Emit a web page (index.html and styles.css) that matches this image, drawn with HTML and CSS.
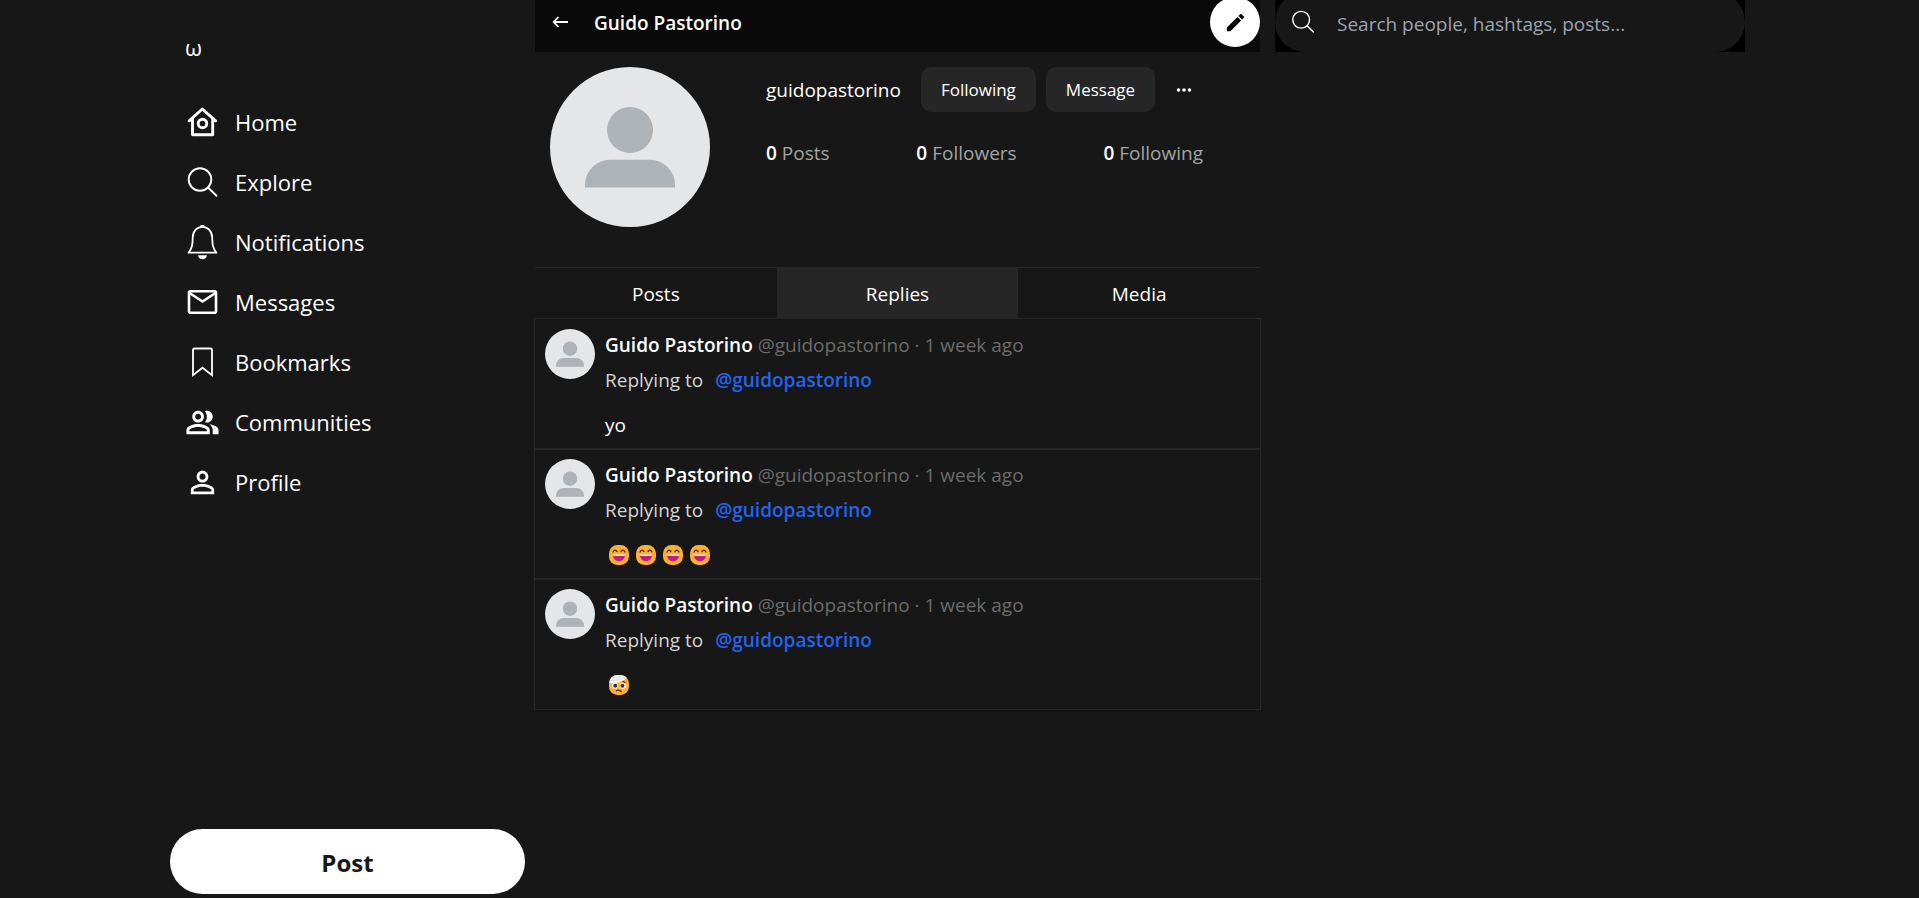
FILE: index.html
```html
<!DOCTYPE html>
<html lang="en">
<head>
<meta charset="utf-8">
<meta name="viewport" content="width=device-width, initial-scale=1">
<title>Guido Pastorino</title>
<link rel="stylesheet" href="styles.css">
</head>
<body>
<svg class="defs" aria-hidden="true">
  <symbol id="avatar" viewBox="0 0 160 160">
    <circle cx="80" cy="80" r="80" fill="#e4e6e7"/>
    <circle cx="80" cy="63" r="23" fill="#adb3b7"/>
    <path d="M35 120.500V118a25 25 0 0 1 25-25.300h40a25 25 0 0 1 25 25.300v2.500z" fill="#adb3b7"/>
  </symbol>
  <symbol id="search" viewBox="0 0 35 35">
    <g fill="none" stroke="currentColor" stroke-width="1.900" stroke-linecap="round"><circle cx="15" cy="14.500" r="11.300"/><path d="M23 22.500l8.500 8.300"/></g>
  </symbol>
  <symbol id="laugh" viewBox="0 0 20 20">
    <rect width="20" height="20" rx="8.500" fill="#ffb02e"/>
    <path d="M4 7q1.800-3.400 4-.500M12 6.500q2.200-2.900 4 .5" fill="none" stroke="#402a32" stroke-width="1.300" stroke-linecap="round"/>
    <path d="M4 9.700h12c0 4-2.700 6.500-6 6.500s-6-2.500-6-6.500z" fill="#bb1d80"/>
    <path d="M4 9.600h12l-.4 1.400H4.400z" fill="#fff"/>
  </symbol>
  <symbol id="bandage" viewBox="0 0 20 20">
    <rect width="20" height="20" rx="8.500" fill="#ffb02e"/>
    <path d="M.3 8C.5 3 4 0 9 0c4 0 7.500 1 8.700 3.200C13 7 6 9 .3 8z" fill="#f4f4f4"/>
    <path d="M1 5.500C6 6 12 4.200 16 1.800M3 3c4 .5 7-.5 10-2.500" fill="none" stroke="#d3d3d8" stroke-width=".7"/>
    <circle cx="6" cy="10.700" r="3" fill="#fff"/><circle cx="14" cy="10.700" r="3" fill="#fff"/>
    <circle cx="6.300" cy="10.700" r="2" fill="#402a32"/><circle cx="13.500" cy="10.700" r="2" fill="#402a32"/>
    <path d="M7.300 15.700q2.500-1.600 5 .8M14 6.500l2 1" fill="none" stroke="#402a32" stroke-width="1.200" stroke-linecap="round"/>
  </symbol>
</svg>
<div class="layout">
  <aside class="sidebar">
    <a class="logo" href="#">ω</a>
    <nav class="nav">
      <a href="#"><svg viewBox="1 .5 35 35"><g fill="none" stroke="currentColor" stroke-width="2.900" stroke-linejoin="round" stroke-linecap="round"><path d="M5.200 16.300L18.300 4.500l13.300 11.800"/><path d="M8.500 14v16.300h20.200V14"/><circle cx="18.500" cy="19" r="4.300"/></g></svg><span>Home</span></a>
      <a href="#"><svg><use href="#search"/></svg><span>Explore</span></a>
      <a href="#"><svg viewBox="1 .5 35 35"><path d="M4.500 28.200C8.300 23.500 8.500 20.500 8.700 13c.2-6.500 4.500-10.700 9.700-10.700S27.900 6.500 28.200 13c.2 7.500.500 10.500 4.300 15.200z" fill="none" stroke="currentColor" stroke-width="1.800" stroke-linejoin="round"/><path d="M16.200 2a2.200 1.800 0 0 1 4.400 0zM14 30.700h9q-.8 4-4.500 4t-4.500-4z" fill="currentColor"/></svg><span>Notifications</span></a>
      <a href="#"><svg viewBox="1 .5 35 35"><g fill="none" stroke="currentColor" stroke-width="2.600" stroke-linejoin="round"><rect x="5" y="6.700" width="27" height="21.500" rx="1.500"/><path d="M5.500 8.500L18.500 17l13-8.500"/></g></svg><span>Messages</span></a>
      <a href="#"><svg viewBox="1 .5 35 35"><path d="M9 30.700V5.500Q9 4 10.500 4H26.500Q28 4 28 5.500V30.700l-9.500-7.500z" fill="none" stroke="currentColor" stroke-width="1.800"/></svg><span>Bookmarks</span></a>
      <a href="#"><svg viewBox="0 0 24 24"><path fill="currentColor" fill-rule="evenodd" d="M16.670 13.130C18.040 14.060 19 15.320 19 17v3h4v-3c0-2.180-3.570-3.470-6.330-3.870zM15 12c2.210 0 4-1.790 4-4s-1.790-4-4-4c-.47 0-.91.1-1.330.24C14.500 5.270 15 6.580 15 8s-.5 2.730-1.330 3.760c.42.14.86.24 1.330.24zM9 12c2.210 0 4-1.790 4-4s-1.790-4-4-4-4 1.790-4 4 1.790 4 4 4zm0-6c1.100 0 2 .9 2 2s-.9 2-2 2-2-.9-2-2 .9-2 2-2zM9 13c-2.670 0-8 1.340-8 4v3h16v-3c0-2.660-5.330-4-8-4zm6 5H3v-.99C3.200 16.290 6.300 15 9 15s5.800 1.290 6 2v1z"/></svg><span>Communities</span></a>
      <a href="#"><svg viewBox="0 0 24 24"><path fill="currentColor" fill-rule="evenodd" d="M12 5.900c1.160 0 2.100.94 2.100 2.100s-.94 2.100-2.100 2.100S9.900 9.160 9.900 8s.94-2.100 2.100-2.100m0 9c2.970 0 6.100 1.460 6.100 2.100v1.100H5.900V17c0-.64 3.130-2.100 6.100-2.100M12 4C9.790 4 8 5.790 8 8s1.790 4 4 4 4-1.790 4-4-1.790-4-4-4zm0 9c-2.670 0-8 1.340-8 4v3h16v-3c0-2.660-5.330-4-8-4z"/></svg><span>Profile</span></a>
    </nav>
    <button class="post-button" type="button">Post</button>
  </aside>

  <main class="main">
    <header class="topbar">
      <button class="back" type="button" aria-label="Back"><svg viewBox="0 0 16 16"><path d="M15.500 8H1.500M6 3L1.200 8 6 13" fill="none" stroke="currentColor" stroke-width="1.800"/></svg></button>
      <h1>Guido Pastorino</h1>
      <button class="edit" type="button" aria-label="Edit profile"><svg viewBox="0 0 24 24"><path d="M3 17.250V21h3.750L17.810 9.940l-3.750-3.750L3 17.250zM20.710 7.040c.39-.39.39-1.020 0-1.410l-2.340-2.340a1 1 0 0 0-1.410 0l-1.830 1.830 3.750 3.750 1.830-1.830z" fill="currentColor"/></svg></button>
    </header>

    <section class="profile">
      <svg class="avatar-large" role="img" aria-label="Guido Pastorino"><use href="#avatar"/></svg>
      <div class="info">
        <div class="actions">
          <span class="username">guidopastorino</span>
          <button class="pill" type="button">Following</button>
          <button class="pill" type="button">Message</button>
          <button class="more" type="button" aria-label="More"><svg viewBox="0 0 16 16" fill="currentColor"><circle cx="2.500" cy="8" r="1.800"/><circle cx="8" cy="8" r="1.800"/><circle cx="13.500" cy="8" r="1.800"/></svg></button>
        </div>
        <div class="stats">
          <span><b>0</b> Posts</span>
          <span><b>0</b> Followers</span>
          <span><b>0</b> Following</span>
        </div>
      </div>
    </section>

    <nav class="tabs">
      <a href="#">Posts</a>
      <a class="active" href="#" aria-current="page">Replies</a>
      <a href="#">Media</a>
    </nav>

    <section class="replies">
      <article class="reply">
        <svg class="avatar-small" aria-hidden="true"><use href="#avatar"/></svg>
        <div class="reply-content">
          <div class="author"><b>Guido Pastorino</b> @guidopastorino · 1 week ago</div>
          <div class="replying">Replying to <a href="#">@guidopastorino</a></div>
          <p class="message">yo</p>
        </div>
      </article>
      <article class="reply">
        <svg class="avatar-small" aria-hidden="true"><use href="#avatar"/></svg>
        <div class="reply-content">
          <div class="author"><b>Guido Pastorino</b> @guidopastorino · 1 week ago</div>
          <div class="replying">Replying to <a href="#">@guidopastorino</a></div>
          <div class="message emojis">
            <svg role="img" aria-label="Laughing face"><use href="#laugh"/></svg>
            <svg role="img" aria-label="Laughing face"><use href="#laugh"/></svg>
            <svg role="img" aria-label="Laughing face"><use href="#laugh"/></svg>
            <svg role="img" aria-label="Laughing face"><use href="#laugh"/></svg>
          </div>
        </div>
      </article>
      <article class="reply">
        <svg class="avatar-small" aria-hidden="true"><use href="#avatar"/></svg>
        <div class="reply-content">
          <div class="author"><b>Guido Pastorino</b> @guidopastorino · 1 week ago</div>
          <div class="replying">Replying to <a href="#">@guidopastorino</a></div>
          <div class="message emojis">
            <svg role="img" aria-label="Face with head bandage"><use href="#bandage"/></svg>
          </div>
        </div>
      </article>
    </section>
  </main>

  <aside class="discover">
    <div class="search-wrap">
      <label class="search">
        <svg aria-hidden="true"><use href="#search"/></svg>
        <input type="search" aria-label="Search" placeholder="Search people, hashtags, posts...">
      </label>
    </div>
  </aside>
</div>
</body>
</html>
```
FILE: styles.css
```css
* { box-sizing: border-box; }

body {
  margin: 0;
  background: #171717;
  color: #fff;
  font-family: "Open Sans", "Noto Sans", sans-serif;
  font-size: 19px;
  line-height: 30px;
}

a { color: inherit; text-decoration: none; }

button {
  border: 0;
  padding: 0;
  background: none;
  color: inherit;
  font: inherit;
  cursor: pointer;
}

svg { display: block; flex: none; }
.defs { position: absolute; width: 0; height: 0; }
b, h1 { font-weight: 600; }

.layout {
  display: grid;
  grid-template-columns: 71fr 145fr 95fr;
  gap: 10px;
  min-height: 100vh;
  padding: 0 174px 0 170px;
}

/* Sidebar */
.sidebar {
  position: sticky;
  top: 0;
  display: flex;
  flex-direction: column;
  height: 100vh;
  padding: 32px 0 4px;
}

.logo { padding: 0 15px; font-size: 22px; }
.nav { padding-top: 30px; }

.nav a {
  display: flex;
  align-items: center;
  gap: 15px;
  height: 60px;
  padding: 0 15px;
  font-size: 22px;
}

.nav svg { width: 35px; height: 35px; }

.post-button {
  height: 65px;
  margin-top: auto;
  padding-top: 2px;
  border-radius: 33px;
  background: #fff;
  color: #171717;
  font-size: 24px;
  font-weight: 700;
}

/* Profile header */
.topbar {
  position: sticky;
  top: 0;
  display: flex;
  align-items: flex-start;
  height: 52px;
  overflow: hidden;
  background: #090909;
}

.back { padding: 14px 25px 14px 17px; }
.back svg { width: 17px; height: 16px; }

.topbar h1 {
  flex: 1;
  margin: 0;
  padding: 8px 0 0;
  font-size: 19px;
  line-height: 30px;
}

.edit {
  display: grid;
  place-items: center;
  width: 50px;
  height: 50px;
  margin-top: -3px;
  border-radius: 50%;
  background: #fff;
  color: #000;
}

.edit svg { width: 23px; height: 23px; }

.profile {
  display: flex;
  gap: 56px;
  padding: 15px 15px 40px;
}

.avatar-large { width: 160px; height: 160px; }
.info { flex: 1; }
.actions { display: flex; align-items: center; gap: 10px; }
.username { margin-right: 10px; }

.pill {
  height: 45px;
  padding: 0 20px;
  border-radius: 10px;
  background: #262626;
  font-size: 17px;
}

.more { padding: 14px 20px 14px 11px; }
.more svg { width: 16px; height: 16px; }

.stats {
  display: flex;
  justify-content: space-between;
  max-width: 437px;
  padding-top: 26px;
  color: #a3a3a3;
}

.stats b { color: #fff; }

.tabs {
  display: grid;
  grid-template-columns: repeat(3, 1fr);
  border-top: 1px solid #262626;
}

.tabs a { padding: 11px 0 10px; text-align: center; }
.tabs .active { background: #262626; }

/* Replies */
.reply {
  display: flex;
  gap: 10px;
  min-height: 130px;
  padding: 10px 10px 9px;
  box-shadow: 0 0 0 1px #262626;
}

.avatar-small { width: 50px; height: 50px; }
.author { color: #6b6b6b; }
.author b { color: #fff; }
.reply-content { padding-top: 1px; }
.replying { padding-top: 5px; color: #d4d4d4; }
.replying a { margin-left: 7px; color: #2563eb; font-weight: 600; }
.message { margin: 15px 0 0; }

.emojis {
  display: flex;
  align-items: center;
  gap: 7px;
  height: 30px;
  padding-left: 4px;
}

.emojis svg { width: 20px; height: 20px; }

/* Search */
.discover { padding-left: 5px; }

.search-wrap {
  height: 52px;
  overflow: hidden;
  background: #000;
}

.search {
  display: flex;
  align-items: center;
  gap: 21px;
  height: 60px;
  margin-top: -8px;
  padding: 0 30px 0 15px;
  border-radius: 30px;
  background: #171717;
}

.search svg { width: 26px; height: 26px; }

.search input {
  flex: 1;
  min-width: 0;
  border: 0;
  padding: 3px 0 0;
  outline: 0;
  background: none;
  color: #fff;
  font: inherit;
}

.search input::placeholder { color: #9ca3af; opacity: 1; }
```
